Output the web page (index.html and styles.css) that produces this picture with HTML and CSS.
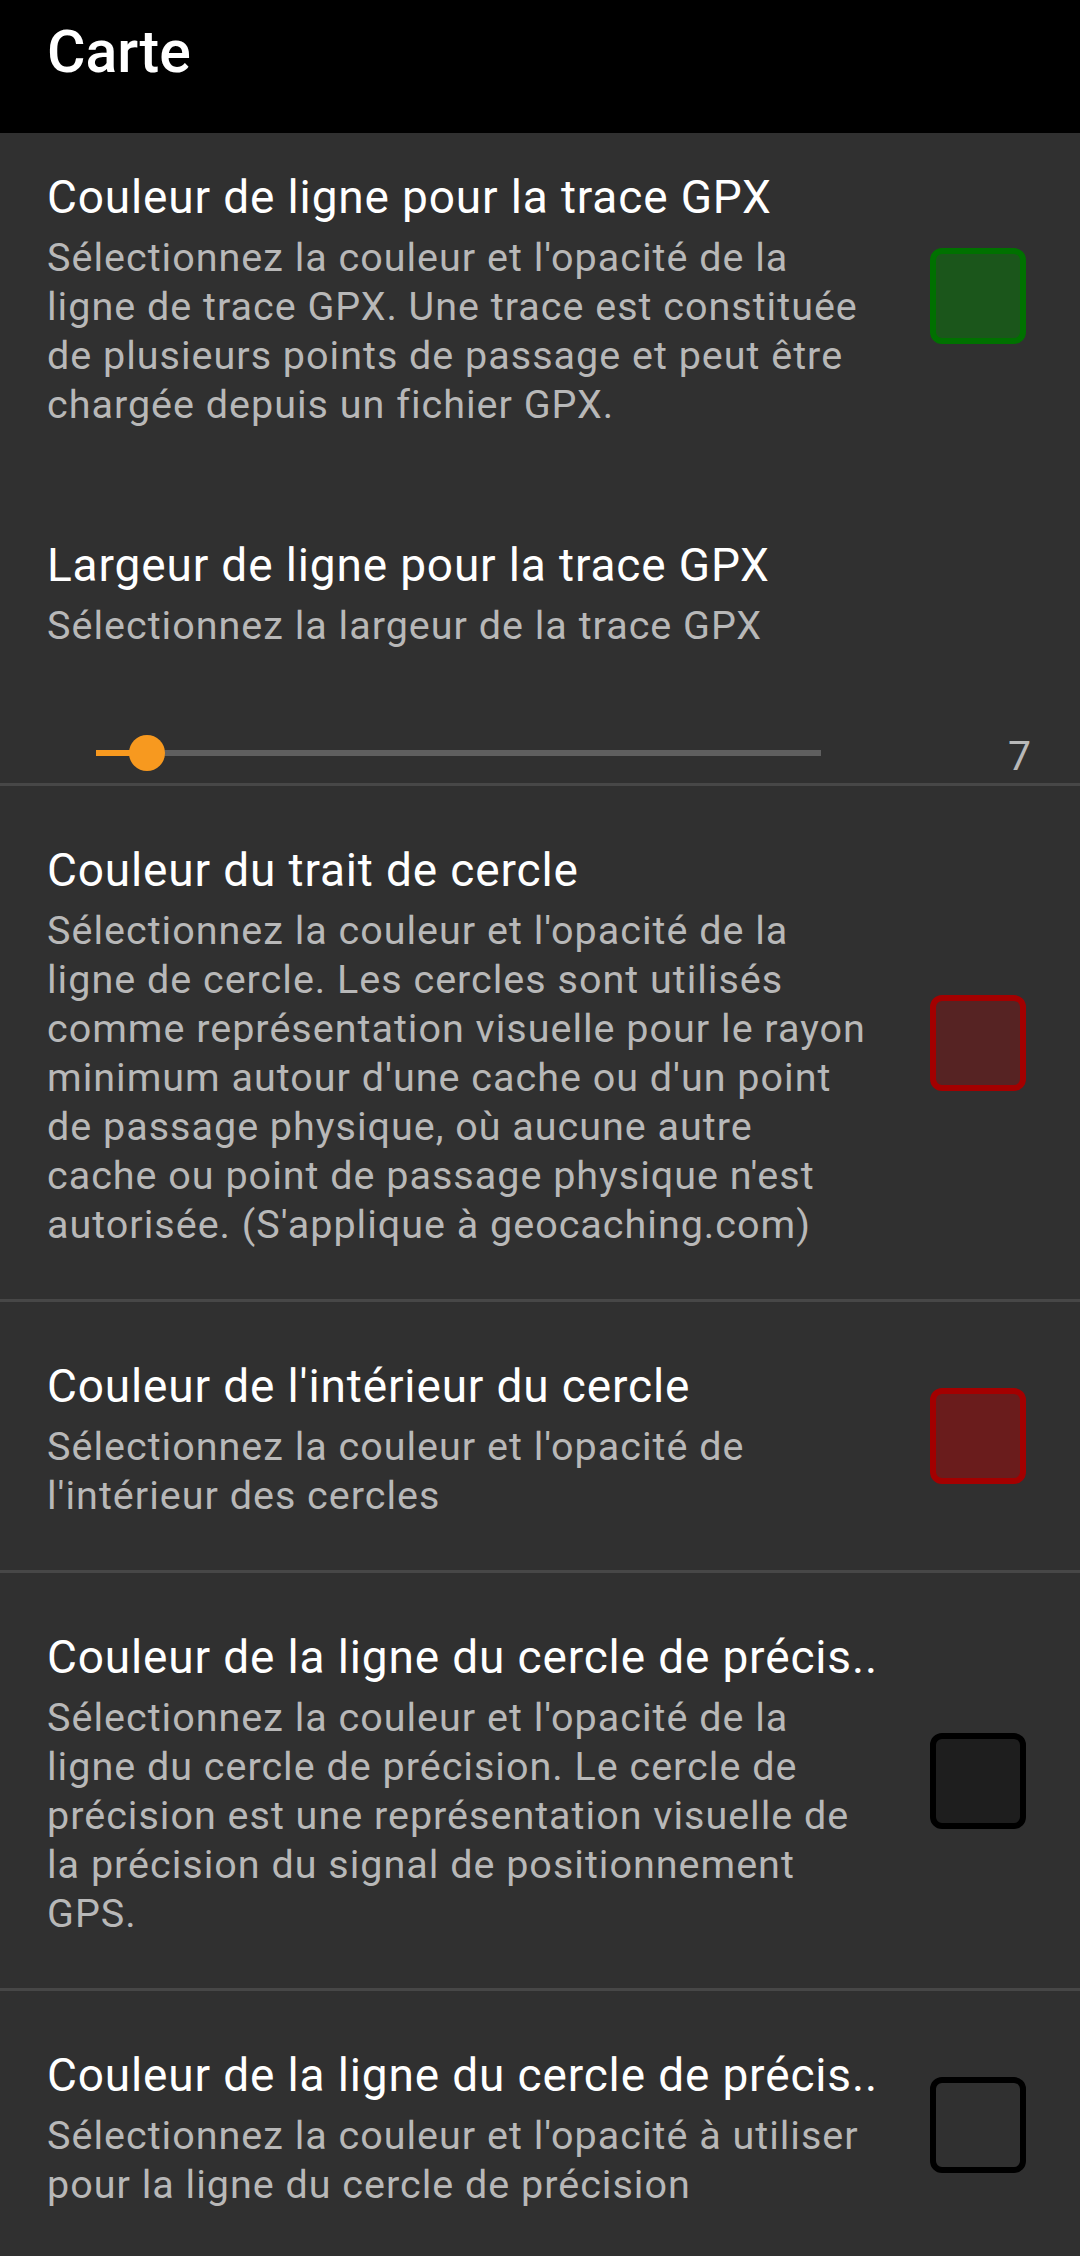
FILE: index.html
```html
<!DOCTYPE html>
<html lang="fr">
<head>
<meta charset="utf-8">
<title>Carte</title>
<link rel="stylesheet" href="styles.css">
</head>
<body>
<header class="appbar"><h1 class="appbar-title">Carte</h1></header>
<main class="list">
  <section class="pref pref-first">
    <div class="pref-text">
      <div class="pref-title">Couleur de ligne pour la trace GPX</div>
      <div class="pref-summary">Sélectionnez la couleur et l'opacité de la ligne de trace GPX. Une trace est constituée de plusieurs points de passage et peut être chargée depuis un fichier GPX.</div>
    </div>
    <div class="swatch swatch-green"></div>
  </section>
  <section class="pref pref-slider">
    <div class="pref-text">
      <div class="pref-title">Largeur de ligne pour la trace GPX</div>
      <div class="pref-summary">Sélectionnez la largeur de la trace GPX</div>
      <div class="slider-row">
        <div class="slider">
          <div class="slider-track"></div>
          <div class="slider-fill"></div>
          <div class="slider-thumb"></div>
        </div>
        <div class="slider-value">7</div>
      </div>
    </div>
  </section>
  <div class="divider"></div>
  <section class="pref">
    <div class="pref-text">
      <div class="pref-title">Couleur du trait de cercle</div>
      <div class="pref-summary">Sélectionnez la couleur et l'opacité de la ligne de cercle. Les cercles sont utilisés comme représentation visuelle pour le rayon minimum autour d'une cache ou d'un point de passage physique, où aucune autre cache ou point de passage physique n'est autorisée. (S'applique à geocaching.com)</div>
    </div>
    <div class="swatch swatch-red-line"></div>
  </section>
  <div class="divider"></div>
  <section class="pref">
    <div class="pref-text">
      <div class="pref-title">Couleur de l'intérieur du cercle</div>
      <div class="pref-summary">Sélectionnez la couleur et l'opacité de l'intérieur des cercles</div>
    </div>
    <div class="swatch swatch-red-fill"></div>
  </section>
  <div class="divider"></div>
  <section class="pref">
    <div class="pref-text">
      <div class="pref-title">Couleur de la ligne du cercle de précis..</div>
      <div class="pref-summary">Sélectionnez la couleur et l'opacité de la ligne du cercle de précision. Le cercle de précision est une représentation visuelle de la précision du signal de positionnement GPS.</div>
    </div>
    <div class="swatch swatch-dark"></div>
  </section>
  <div class="divider"></div>
  <section class="pref">
    <div class="pref-text">
      <div class="pref-title">Couleur de la ligne du cercle de précis..</div>
      <div class="pref-summary">Sélectionnez la couleur et l'opacité à utiliser pour la ligne du cercle de précision</div>
    </div>
    <div class="swatch swatch-empty"></div>
  </section>
</main>
</body>
</html>
```

FILE: styles.css
```css
* { box-sizing: border-box; }
html, body {
  margin: 0;
  padding: 0;
  background: #303030;
  font-family: Roboto, "Liberation Sans", sans-serif;
}
body { min-height: 2256px; }

.appbar {
  height: 133px;
  background: #000;
  padding: 17px 0 0 47px;
}
.appbar-title {
  margin: 0;
  font-size: 59px;
  line-height: 70px;
  font-weight: 500;
  color: #fff;
}

.list { display: flex; flex-direction: column; }

.pref {
  display: flex;
  align-items: center;
  padding: 58px 54px 58px 47px;
}
.pref-first { padding-top: 38px; }
.pref-slider { padding: 60px 49px 0 47px; }

.pref-text { flex: 1; min-width: 0; }
.pref-title {
  font-size: 46px;
  line-height: 52px;
  letter-spacing: 0.85px;
  color: #fff;
  white-space: nowrap;
}
.pref-summary {
  margin-top: 10px;
  margin-bottom: -8px;
  font-size: 39.5px;
  line-height: 49px;
  letter-spacing: 1px;
  color: #b8b8b8;
}
.pref-slider .pref-summary { margin-bottom: 0; }

.swatch {
  flex: 0 0 96px;
  width: 96px;
  height: 96px;
  margin-left: 59px;
  border: 6px solid;
  border-radius: 12px;
}
.swatch-green { border-color: #007100; background: #1b561b; }
.swatch-red-line { border-color: #a30000; background: #562323; }
.swatch-red-fill { border-color: #a30000; background: #6a1c1c; }
.swatch-dark { border-color: #000; background: #1e1e1e; }
.swatch-empty { border-color: #000; background: transparent; }

.slider-row {
  display: flex;
  align-items: center;
  height: 48px;
  margin-top: 79px;
  margin-bottom: 6px;
}
.slider {
  position: relative;
  margin-left: 49px;
  width: 725px;
  height: 36px;
}
.slider-track {
  position: absolute;
  left: 0; right: 0; top: 15px;
  height: 6px;
  background: #5f5f5f;
}
.slider-fill {
  position: absolute;
  left: 0; top: 15px;
  width: 52px;
  height: 6px;
  background: #f7991f;
}
.slider-thumb {
  position: absolute;
  left: 33px; top: 0;
  width: 36px; height: 36px;
  border-radius: 50%;
  background: #f7991f;
}
.slider-value {
  margin-left: auto;
  font-size: 41px;
  line-height: 48px;
  color: #b8b8b8;
  padding-top: 6px;
}

.divider {
  height: 3px;
  background: #474747;
}
```
